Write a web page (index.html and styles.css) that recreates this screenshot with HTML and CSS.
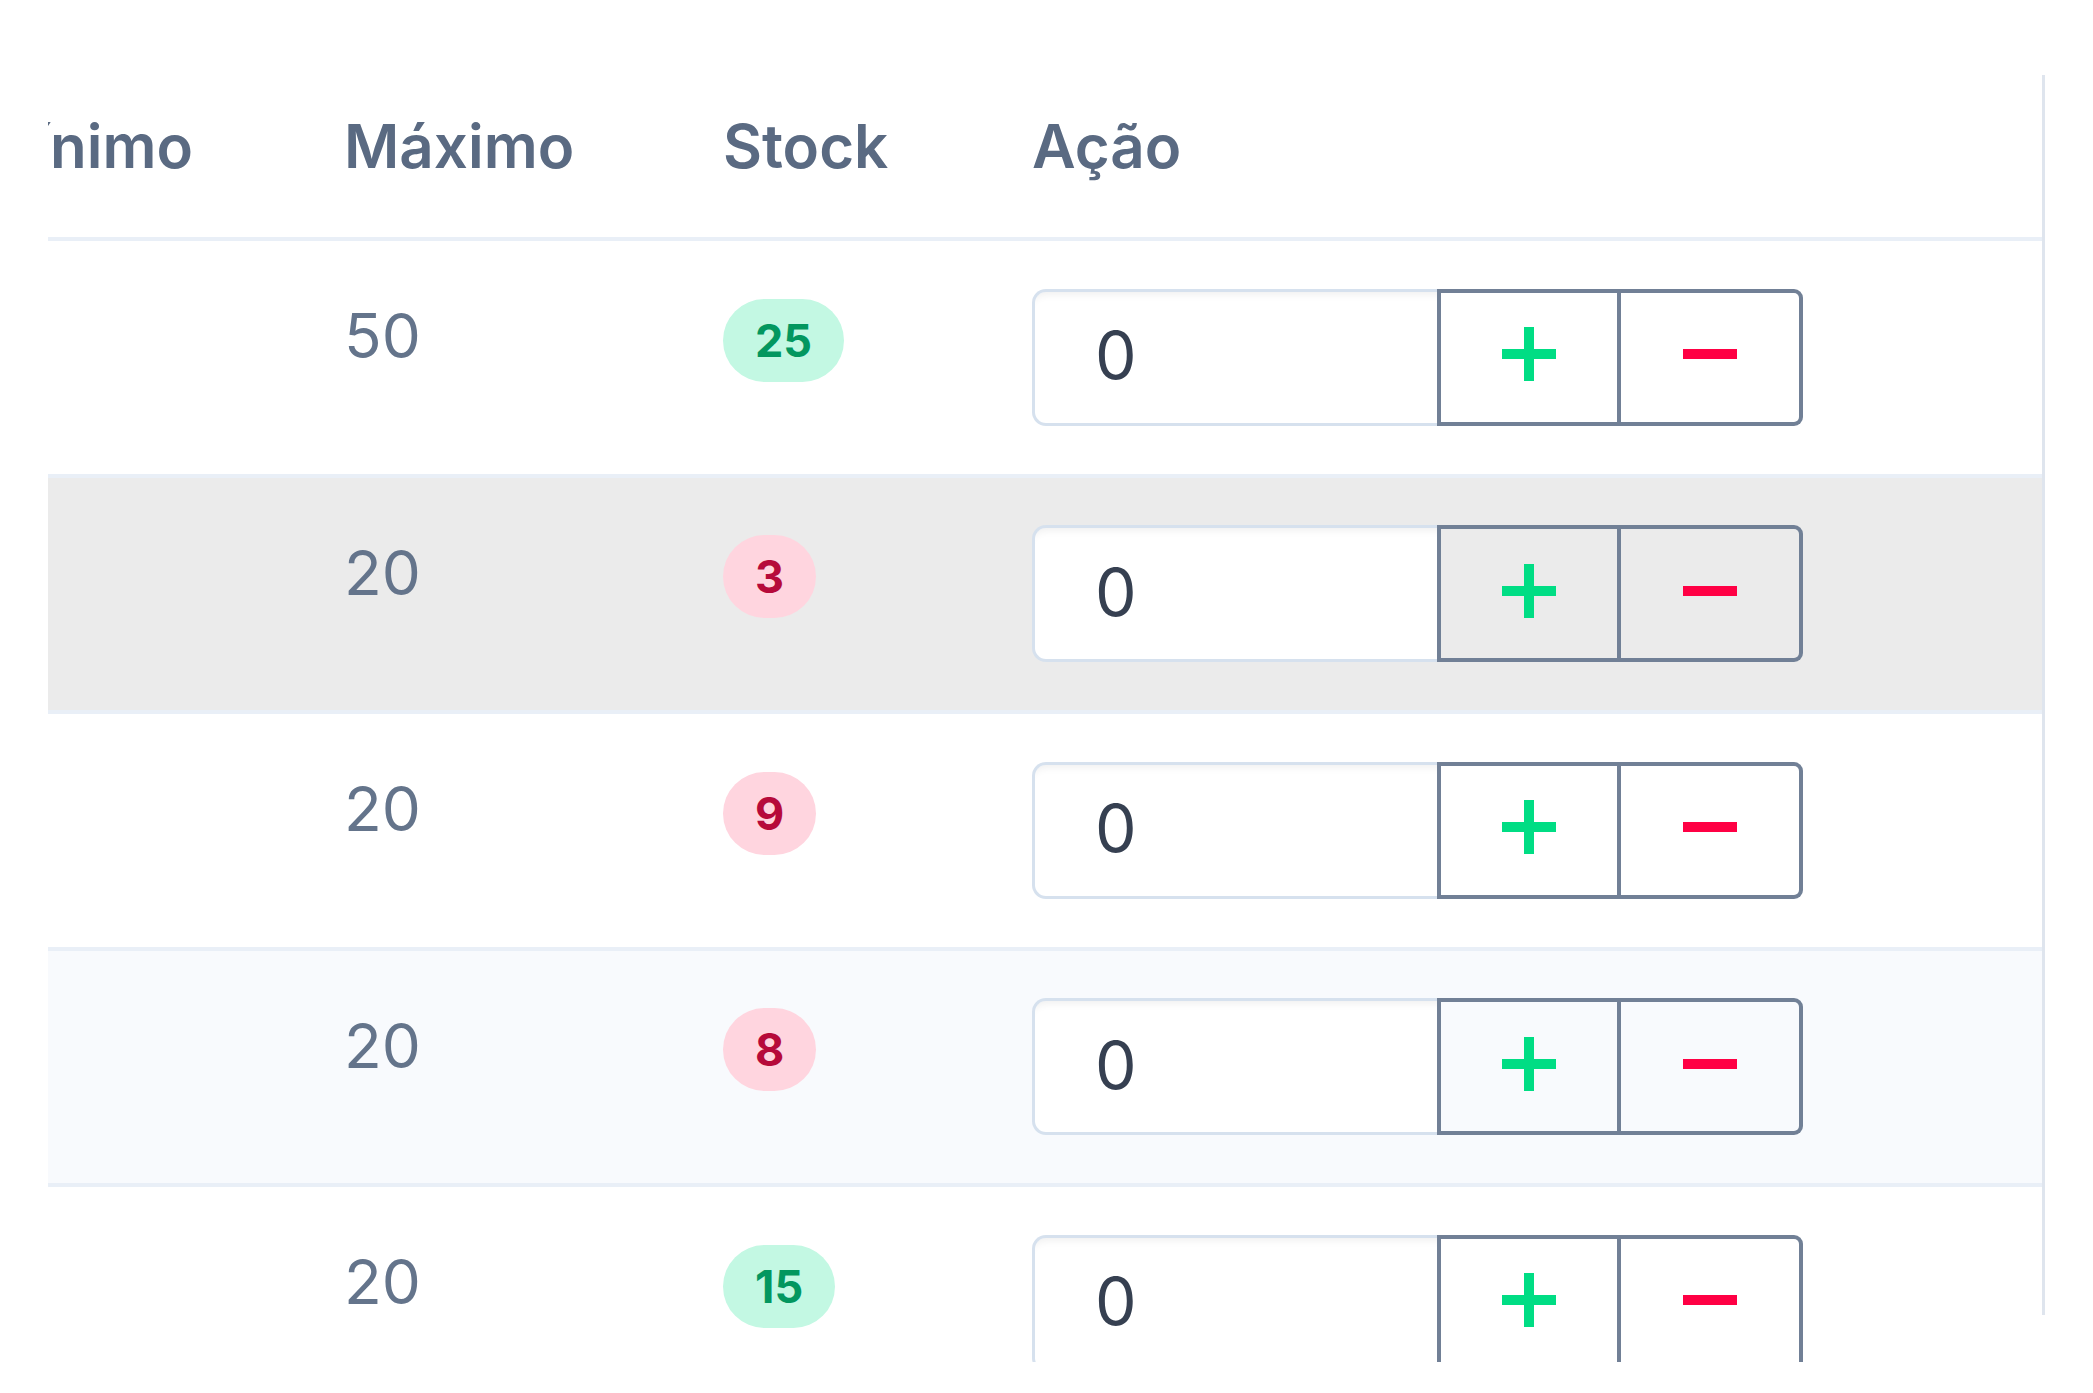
FILE: index.html
```html
<!DOCTYPE html>
<html lang="pt">
<head>
<meta charset="utf-8">
<title>Stock</title>
<link rel="stylesheet" href="styles.css">
</head>
<body>
<div class="viewport">
  <div class="scroller">
    <div class="table">
      <div class="row head">
        <div class="th first">Mínimo</div>
        <div class="th">Máximo</div>
        <div class="th">Stock</div>
        <div class="th">Ação</div>
      </div>

      <div class="row">
        <div class="td"></div>
        <div class="td num">50</div>
        <div class="td"><span class="badge ok">25</span></div>
        <div class="td act">
          <div class="group">
            <input class="qty" type="text" value="0">
            <button class="btn plus" type="button"><svg width="54" height="54" viewBox="0 0 54 54"><path d="M27 0v54M0 27h54" stroke="#00dd84" stroke-width="10"/></svg></button>
            <button class="btn minus" type="button"><svg width="54" height="54" viewBox="0 0 54 54"><path d="M0 27h54" stroke="#ff0044" stroke-width="10"/></svg></button>
          </div>
        </div>
      </div>

      <div class="row hover">
        <div class="td"></div>
        <div class="td num">20</div>
        <div class="td"><span class="badge low">3</span></div>
        <div class="td act">
          <div class="group">
            <input class="qty" type="text" value="0">
            <button class="btn plus" type="button"><svg width="54" height="54" viewBox="0 0 54 54"><path d="M27 0v54M0 27h54" stroke="#00dd84" stroke-width="10"/></svg></button>
            <button class="btn minus" type="button"><svg width="54" height="54" viewBox="0 0 54 54"><path d="M0 27h54" stroke="#ff0044" stroke-width="10"/></svg></button>
          </div>
        </div>
      </div>

      <div class="row">
        <div class="td"></div>
        <div class="td num">20</div>
        <div class="td"><span class="badge low">9</span></div>
        <div class="td act">
          <div class="group">
            <input class="qty" type="text" value="0">
            <button class="btn plus" type="button"><svg width="54" height="54" viewBox="0 0 54 54"><path d="M27 0v54M0 27h54" stroke="#00dd84" stroke-width="10"/></svg></button>
            <button class="btn minus" type="button"><svg width="54" height="54" viewBox="0 0 54 54"><path d="M0 27h54" stroke="#ff0044" stroke-width="10"/></svg></button>
          </div>
        </div>
      </div>

      <div class="row stripe">
        <div class="td"></div>
        <div class="td num">20</div>
        <div class="td"><span class="badge low">8</span></div>
        <div class="td act">
          <div class="group">
            <input class="qty" type="text" value="0">
            <button class="btn plus" type="button"><svg width="54" height="54" viewBox="0 0 54 54"><path d="M27 0v54M0 27h54" stroke="#00dd84" stroke-width="10"/></svg></button>
            <button class="btn minus" type="button"><svg width="54" height="54" viewBox="0 0 54 54"><path d="M0 27h54" stroke="#ff0044" stroke-width="10"/></svg></button>
          </div>
        </div>
      </div>

      <div class="row">
        <div class="td"></div>
        <div class="td num">20</div>
        <div class="td"><span class="badge ok">15</span></div>
        <div class="td act">
          <div class="group">
            <input class="qty" type="text" value="0">
            <button class="btn plus" type="button"><svg width="54" height="54" viewBox="0 0 54 54"><path d="M27 0v54M0 27h54" stroke="#00dd84" stroke-width="10"/></svg></button>
            <button class="btn minus" type="button"><svg width="54" height="54" viewBox="0 0 54 54"><path d="M0 27h54" stroke="#ff0044" stroke-width="10"/></svg></button>
          </div>
        </div>
      </div>
    </div>
  </div>
</div>
</body>
</html>
```

FILE: styles.css
```css
html, body {
  margin: 0;
  padding: 0;
  background: #ffffff;
}

body {
  font-family: Inter, "Noto Sans", "Liberation Sans", sans-serif;
}

.viewport {
  height: 1362px;
  overflow: hidden;
  padding-top: 75px;
  box-sizing: border-box;
}

.scroller {
  position: relative;
  margin-left: 48px;
  width: 1997px;
  height: 1287px;
  overflow: hidden;
}

.scroller::after {
  content: "";
  position: absolute;
  top: 0;
  right: 0;
  width: 3px;
  height: 1240px;
  background: #dfe5ee;
}

.table {
  margin-left: -112px;
  width: 2106px;
}

.row {
  display: grid;
  grid-template-columns: 360px 379px 309px 1fr;
  height: 232.5px;
  border-bottom: 4px solid #e9eff7;
  background: #ffffff;
}

.row.head {
  height: 162px;
}

.row.hover {
  background: #ebebeb;
}

.row.stripe {
  background: #f8fafd;
}

.th {
  padding: 35px 0 0 48px;
  font-size: 60px;
  line-height: 73px;
  font-weight: 600;
  color: #5a6a82;
  white-space: nowrap;
}

.th.first {
  padding-left: 43px;
}

.td {
  padding-left: 48px;
  white-space: nowrap;
}

.td.num {
  padding-top: 57px;
  font-size: 62px;
  line-height: 75px;
  font-weight: 400;
  color: #64748b;
}

.badge {
  display: inline-block;
  margin-top: 57.5px;
  height: 83px;
  line-height: 83px;
  padding: 0 32px;
  border-radius: 42px;
  font-size: 45px;
  font-weight: 700;
}

.badge.ok {
  background: #c3f8e3;
  color: #03975f;
}

.badge.low {
  background: #ffd5df;
  color: #b60a3a;
}

.td.act {
  display: flex;
  align-items: center;
}

.group {
  display: flex;
  height: 137px;
  width: 771px;
}

.qty {
  width: 405px;
  height: 137px;
  box-sizing: border-box;
  margin: 0;
  border: 3px solid #d6e1ee;
  border-right: 0;
  border-radius: 14px 0 0 14px;
  background: #ffffff;
  box-shadow: inset 0 10px 8px -8px rgba(0, 0, 0, 0.07);
  padding: 0 0 4px 60px;
  font-family: Inter, "Noto Sans", sans-serif;
  font-size: 66px;
  color: #364051;
  outline: none;
}

.btn {
  display: flex;
  align-items: center;
  justify-content: center;
  height: 137px;
  margin: 0;
  padding: 0 0 6px 0;
  box-sizing: border-box;
  background: transparent;
  border: 4px solid #718096;
  cursor: pointer;
}

.btn.plus {
  width: 184px;
}

.btn.minus {
  width: 182px;
  border-left: 0;
  border-radius: 0 9px 9px 0;
}

.btn svg {
  display: block;
}
```
